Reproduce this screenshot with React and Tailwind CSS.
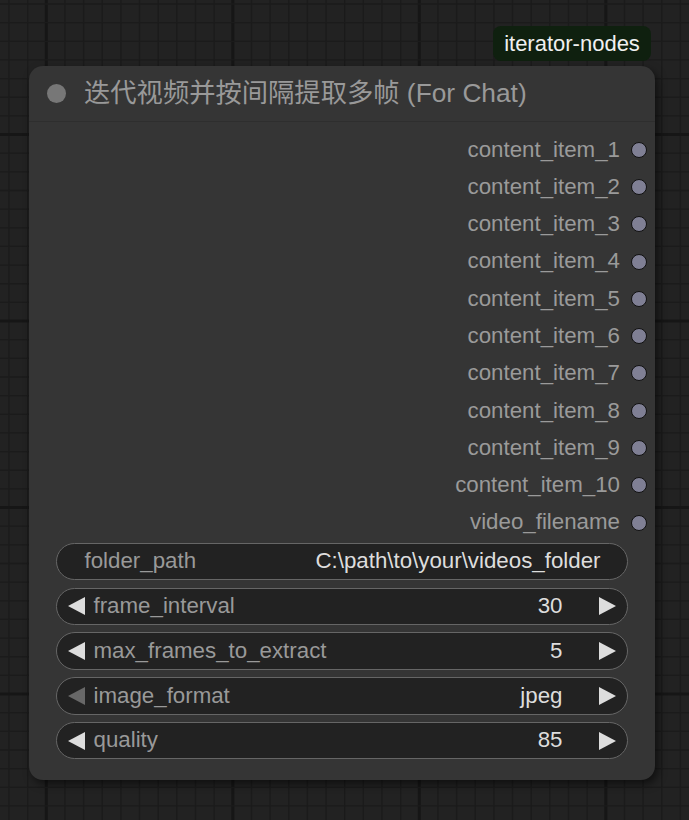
import React from "react";

const FONT = { fontFamily: '"Liberation Sans", Arial, "Noto Sans CJK SC", sans-serif' };

function Grid() {
  const vx = [];
  for (let k = 0; k < 38; k++) vx.push({ x: 9 + 18.65 * k, thick: (k - 2) % 10 === 0 });
  const hy = [];
  for (let k = 0; k < 45; k++) hy.push({ y: 4 + 18.65 * k, thick: (k - 7) % 10 === 0 });
  return (
    <svg className="absolute inset-0" width="689" height="820">
      <rect width="689" height="820" fill="#222222" />
      {vx.map((l, i) => (
        <line key={"v" + i} x1={l.x} x2={l.x} y1={0} y2={820} stroke={l.thick ? "#161616" : "#1b1b1b"} strokeWidth={l.thick ? 3 : 1.3} />
      ))}
      {hy.map((l, i) => (
        <line key={"h" + i} y1={l.y} y2={l.y} x1={0} x2={689} stroke={l.thick ? "#161616" : "#1b1b1b"} strokeWidth={l.thick ? 3 : 1.3} />
      ))}
    </svg>
  );
}

function LeftArrow({ dim }) {
  return (
    <svg width="17" height="18" viewBox="0 0 17 18" className="shrink-0">
      <polygon points="17,0 17,18 0,9" fill={dim ? "#686868" : "#dddddd"} />
    </svg>
  );
}
function RightArrow() {
  return (
    <svg width="17" height="18" viewBox="0 0 17 18" className="shrink-0">
      <polygon points="0,0 0,18 17,9" fill="#dddddd" />
    </svg>
  );
}

const slots = [
  "content_item_1",
  "content_item_2",
  "content_item_3",
  "content_item_4",
  "content_item_5",
  "content_item_6",
  "content_item_7",
  "content_item_8",
  "content_item_9",
  "content_item_10",
  "video_filename",
];

const numWidgets = [
  { label: "frame_interval", value: "30" },
  { label: "max_frames_to_extract", value: "5" },
  { label: "image_format", value: "jpeg", dim: true },
  { label: "quality", value: "85" },
];

export default function App() {
  return (
    <div className="relative w-[689px] h-[820px] overflow-hidden bg-[#222222]" style={FONT}>
      <Grid />
      <div className="absolute left-[493px] top-[26px] w-[158px] h-[35px] rounded-[8px] bg-[#0f200f] flex items-center justify-center text-[22px] text-[#f0f0f0] leading-none">
        iterator-nodes
      </div>
      <div className="absolute left-[29px] top-[66px] w-[626px] h-[714px] rounded-[14px] bg-[#353535] shadow-[3px_4px_8px_rgba(0,0,0,0.55)] flex flex-col">
        <div className="h-[56px] shrink-0 flex items-center pl-[18px] border-b border-[#2e2e2e]">
          <div className="w-[19px] h-[19px] rounded-full bg-[#777777]" />
          <div className="ml-[18px] text-[26.3px] text-[#999999] leading-none whitespace-nowrap">
            迭代视频并按间隔提取多帧 (For Chat)
          </div>
        </div>
        <div className="flex flex-col pt-[9px]">
          {slots.map((s) => (
            <div key={s} className="h-[37.3px] flex items-center justify-end pr-[8px]">
              <span className="text-[22.3px] text-[#9a9a9a] leading-none">{s}</span>
              <span className="ml-[11px] w-[16px] h-[16px] rounded-full bg-[#7f7f94] border-[1.5px] border-[#111]" />
            </div>
          ))}
        </div>
        <div className="mt-[1.5px] px-[27px] flex flex-col gap-[7.25px]">
          <div className="h-[37.5px] rounded-full border-[1.5px] border-[#666666] bg-[#222222] flex items-center pl-[27.5px] pr-[26.5px] text-[22.3px] leading-none">
            <span className="text-[#999999]">folder_path</span>
            <span className="flex-1" />
            <span className="text-[#dddddd]">C:\path\to\your\videos_folder</span>
          </div>
          {numWidgets.map((w) => (
            <div key={w.label} className="h-[37.5px] rounded-full border-[1.5px] border-[#666666] bg-[#222222] flex items-center pl-[10.5px] pr-[11.5px] text-[22.3px] leading-none">
              <LeftArrow dim={w.dim} />
              <span className="ml-[9px] text-[#999999]">{w.label}</span>
              <span className="flex-1" />
              <span className="text-[#dddddd]">{w.value}</span>
              <span className="w-[36px]" />
              <RightArrow />
            </div>
          ))}
        </div>
      </div>
    </div>
  );
}
